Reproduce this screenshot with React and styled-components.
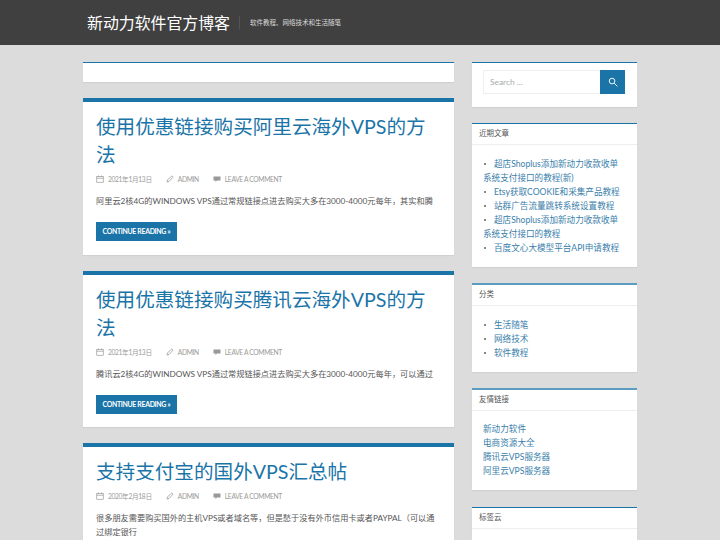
import React from "react";
import styled, { createGlobalStyle } from "styled-components";

const Global = createGlobalStyle`
  html, body { margin: 0; padding: 0; height: 540px; overflow: hidden; background: #dcdcdc; }
  body { font-family: "Lato", "Noto Sans CJK SC", sans-serif; color: #404040; }
  * { box-sizing: border-box; }
  a { text-decoration: none; color: inherit; }
`;

const Blue = "#1a74a8";

const Header = styled.header`
  height: 45px;
  background: #404040;
`;
const HeaderInner = styled.div`
  width: 554px;
  margin: 0 auto;
  height: 100%;
  display: flex;
  align-items: center;
  padding-left: 4px;
`;
const SiteTitle = styled.h1`
  margin: 0;
  font-size: 15.9px;
  line-height: 20px;
  font-weight: 400;
  color: #fff;
`;
const SiteDesc = styled.p`
  margin: 0 0 0 9px;
  padding-left: 10px;
  border-left: 1px solid #555;
  font-size: 6.5px;
  line-height: 13px;
  color: #ddd;
`;
const Wrap = styled.div`
  width: 554px;
  margin: 17px auto 0;
  display: flex;
  align-items: flex-start;
  gap: 18px;
`;
const Main = styled.main`
  width: 371px;
  display: flex;
  flex-direction: column;
  gap: 16px;
`;
const Side = styled.aside`
  width: 165px;
  display: flex;
  flex-direction: column;
  gap: 16px;
`;
const Spacer = styled.div`
  height: 20px;
  background: #fff;
  border-top: 1px solid ${Blue};
  box-shadow: 0 1px 1px #d0d0d0;
`;
const Post = styled.article`
  background: #fff;
  border-top: 4px solid ${Blue};
  padding: 11px 13px 13.5px;
  box-shadow: 0 1px 1px #d0d0d0;
`;
const Title = styled.h2`
  margin: 0;
  font-size: 19.6px;
  line-height: 28px;
  font-weight: 400;
  color: ${Blue};
`;
const Meta = styled.div`
  display: flex;
  align-items: center;
  margin-top: 4px;
  height: 12px;
  font-size: 6.7px;
  letter-spacing: -0.35px;
  color: #9a9a9a;
  text-transform: uppercase;
`;
const MetaItem = styled.span`
  display: inline-flex;
  align-items: center;
  gap: 4px;
  margin-right: 14px;
  svg { width: 8px; height: 8px; flex: none; }
`;
const Excerpt = styled.p`
  margin: 9px 0 0;
  max-width: 340px;
  font-size: 8.2px;
  line-height: 14px;
  color: #555;
`;
const More = styled.a`
  display: block;
  width: fit-content;
  margin-top: 14px;
  height: 19px;
  line-height: 19px;
  padding: 0 6.5px;
  background: ${Blue};
  color: #fff;
  font-size: 6.9px;
  letter-spacing: -0.3px;
  font-weight: 700;
  text-transform: uppercase;
`;
const Widget = styled.section`
  background: #fff;
  border-top: ${p => (p.$thick ? 2 : 1)}px solid ${p => (p.$thick ? "#5b9cc0" : Blue)};
  box-shadow: 0 1px 1px #d0d0d0;
`;
const TagWidget = styled(Widget)`
  margin-top: 1px;
`;
const WidgetTitle = styled.h3`
  margin: 0;
  height: 21px;
  line-height: 20px;
  padding-left: 7px;
  border-bottom: 1px solid #eee;
  font-size: 7.5px;
  font-weight: 400;
  color: #555;
`;
const WidgetBody = styled.div`
  padding: ${p => (p.$tight ? 11 : 12)}px 12px 12px 11px;
`;
const SearchForm = styled.form`
  display: flex;
  height: 24px;
  margin: 7px 12px 13px 11px;
`;
const SearchInput = styled.div`
  flex: 1;
  border: 1px solid #eee;
  border-right: 0;
  padding-left: 6px;
  font-size: 8.4px;
  line-height: 23px;
  color: #aaa;
`;
const SearchBtn = styled.div`
  width: 25px;
  background: ${Blue};
  display: flex;
  align-items: center;
  justify-content: center;
  svg { width: 10px; height: 10px; }
`;
const LinkList = styled.ul`
  margin: 0;
  padding: 0;
  list-style: none;
`;
const LinkItem = styled.li`
  font-size: 8.6px;
  line-height: 14px;
  color: #3a80ab;
  ${p => p.$bullet ? `
    &::before {
      content: "";
      display: inline-block;
      width: 2px;
      height: 2px;
      margin: 0 8px 2px 1px;
      vertical-align: middle;
      background: #888;
    }
  ` : ""}
`;

const Cal = () => (
  <svg viewBox="0 0 16 16" fill="none" stroke="#999" strokeWidth="1.4"><rect x="1.5" y="3" width="13" height="11.5" /><path d="M1.5 6.5h13M5 1v3M11 1v3" /></svg>
);
const Pen = () => (
  <svg viewBox="0 0 16 16" fill="none" stroke="#999" strokeWidth="1.6"><path d="M2 14l1-4 7.5-7.5a1.5 1.5 0 0 1 2.5 0.5l0.5 .5a1.5 1.5 0 0 1 -.5 2L6 13z" /></svg>
);
const Bubble = () => (
  <svg viewBox="0 0 16 16" fill="#999"><path d="M1 3h14v8H8l-3 3v-3H1z" /></svg>
);
const Glass = () => (
  <svg viewBox="0 0 16 16" fill="none" stroke="#fff" strokeWidth="1.5"><circle cx="6.5" cy="6.5" r="4.5" /><path d="M10 10l5 5" /></svg>
);

const posts = [
  { t: "使用优惠链接购买阿里云海外VPS的方法", d: "2021年1月13日", x: "阿里云2核4G的WINDOWS VPS通过常规链接点进去购买大多在3000-4000元每年，其实和腾" },
  { t: "使用优惠链接购买腾讯云海外VPS的方法", d: "2021年1月13日", x: "腾讯云2核4G的WINDOWS VPS通过常规链接点进去购买大多在3000-4000元每年，可以通过" },
  { t: "支持支付宝的国外VPS汇总帖", d: "2020年2月18日", x: "很多朋友需要购买国外的主机VPS或者域名等，但是愁于没有外币信用卡或者PAYPAL（可以通过绑定银行" },
];
const recent = ["超店Shoplus添加新动力收款收单系统支付接口的教程(新)", "Etsy获取COOKIE和采集产品教程", "站群广告流量跳转系统设置教程", "超店Shoplus添加新动力收款收单系统支付接口的教程", "百度文心大模型平台API申请教程"];
const cats = ["生活随笔", "网络技术", "软件教程"];
const links = ["新动力软件", "电商资源大全", "腾讯云VPS服务器", "阿里云VPS服务器"];

export default function App() {
  return (
    <>
      <Global />
      <Header>
        <HeaderInner>
          <SiteTitle>新动力软件官方博客</SiteTitle>
          <SiteDesc>软件教程、网络技术和生活随笔</SiteDesc>
        </HeaderInner>
      </Header>
      <Wrap>
        <Main>
          <Spacer />
          {posts.map((p, i) => (
            <Post key={i}>
              <Title>{p.t}</Title>
              <Meta>
                <MetaItem><Cal />{p.d}</MetaItem>
                <MetaItem><Pen />admin</MetaItem>
                <MetaItem><Bubble />Leave a comment</MetaItem>
              </Meta>
              <Excerpt>{p.x}</Excerpt>
              {i < 2 && <More>Continue reading »</More>}
            </Post>
          ))}
        </Main>
        <Side>
          <Widget>
            <SearchForm>
              <SearchInput>Search ...</SearchInput>
              <SearchBtn><Glass /></SearchBtn>
            </SearchForm>
          </Widget>
          <Widget>
            <WidgetTitle>近期文章</WidgetTitle>
            <WidgetBody>
              <LinkList>{recent.map(r => <LinkItem $bullet key={r}>{r}</LinkItem>)}</LinkList>
            </WidgetBody>
          </Widget>
          <Widget $thick>
            <WidgetTitle>分类</WidgetTitle>
            <WidgetBody>
              <LinkList>{cats.map(r => <LinkItem $bullet key={r}>{r}</LinkItem>)}</LinkList>
            </WidgetBody>
          </Widget>
          <Widget $thick>
            <WidgetTitle>友情链接</WidgetTitle>
            <WidgetBody $tight>
              <LinkList>{links.map(r => <LinkItem key={r}>{r}</LinkItem>)}</LinkList>
            </WidgetBody>
          </Widget>
          <TagWidget>
            <WidgetTitle>标签云</WidgetTitle>
            <WidgetBody />
          </TagWidget>
        </Side>
      </Wrap>
    </>
  );
}
